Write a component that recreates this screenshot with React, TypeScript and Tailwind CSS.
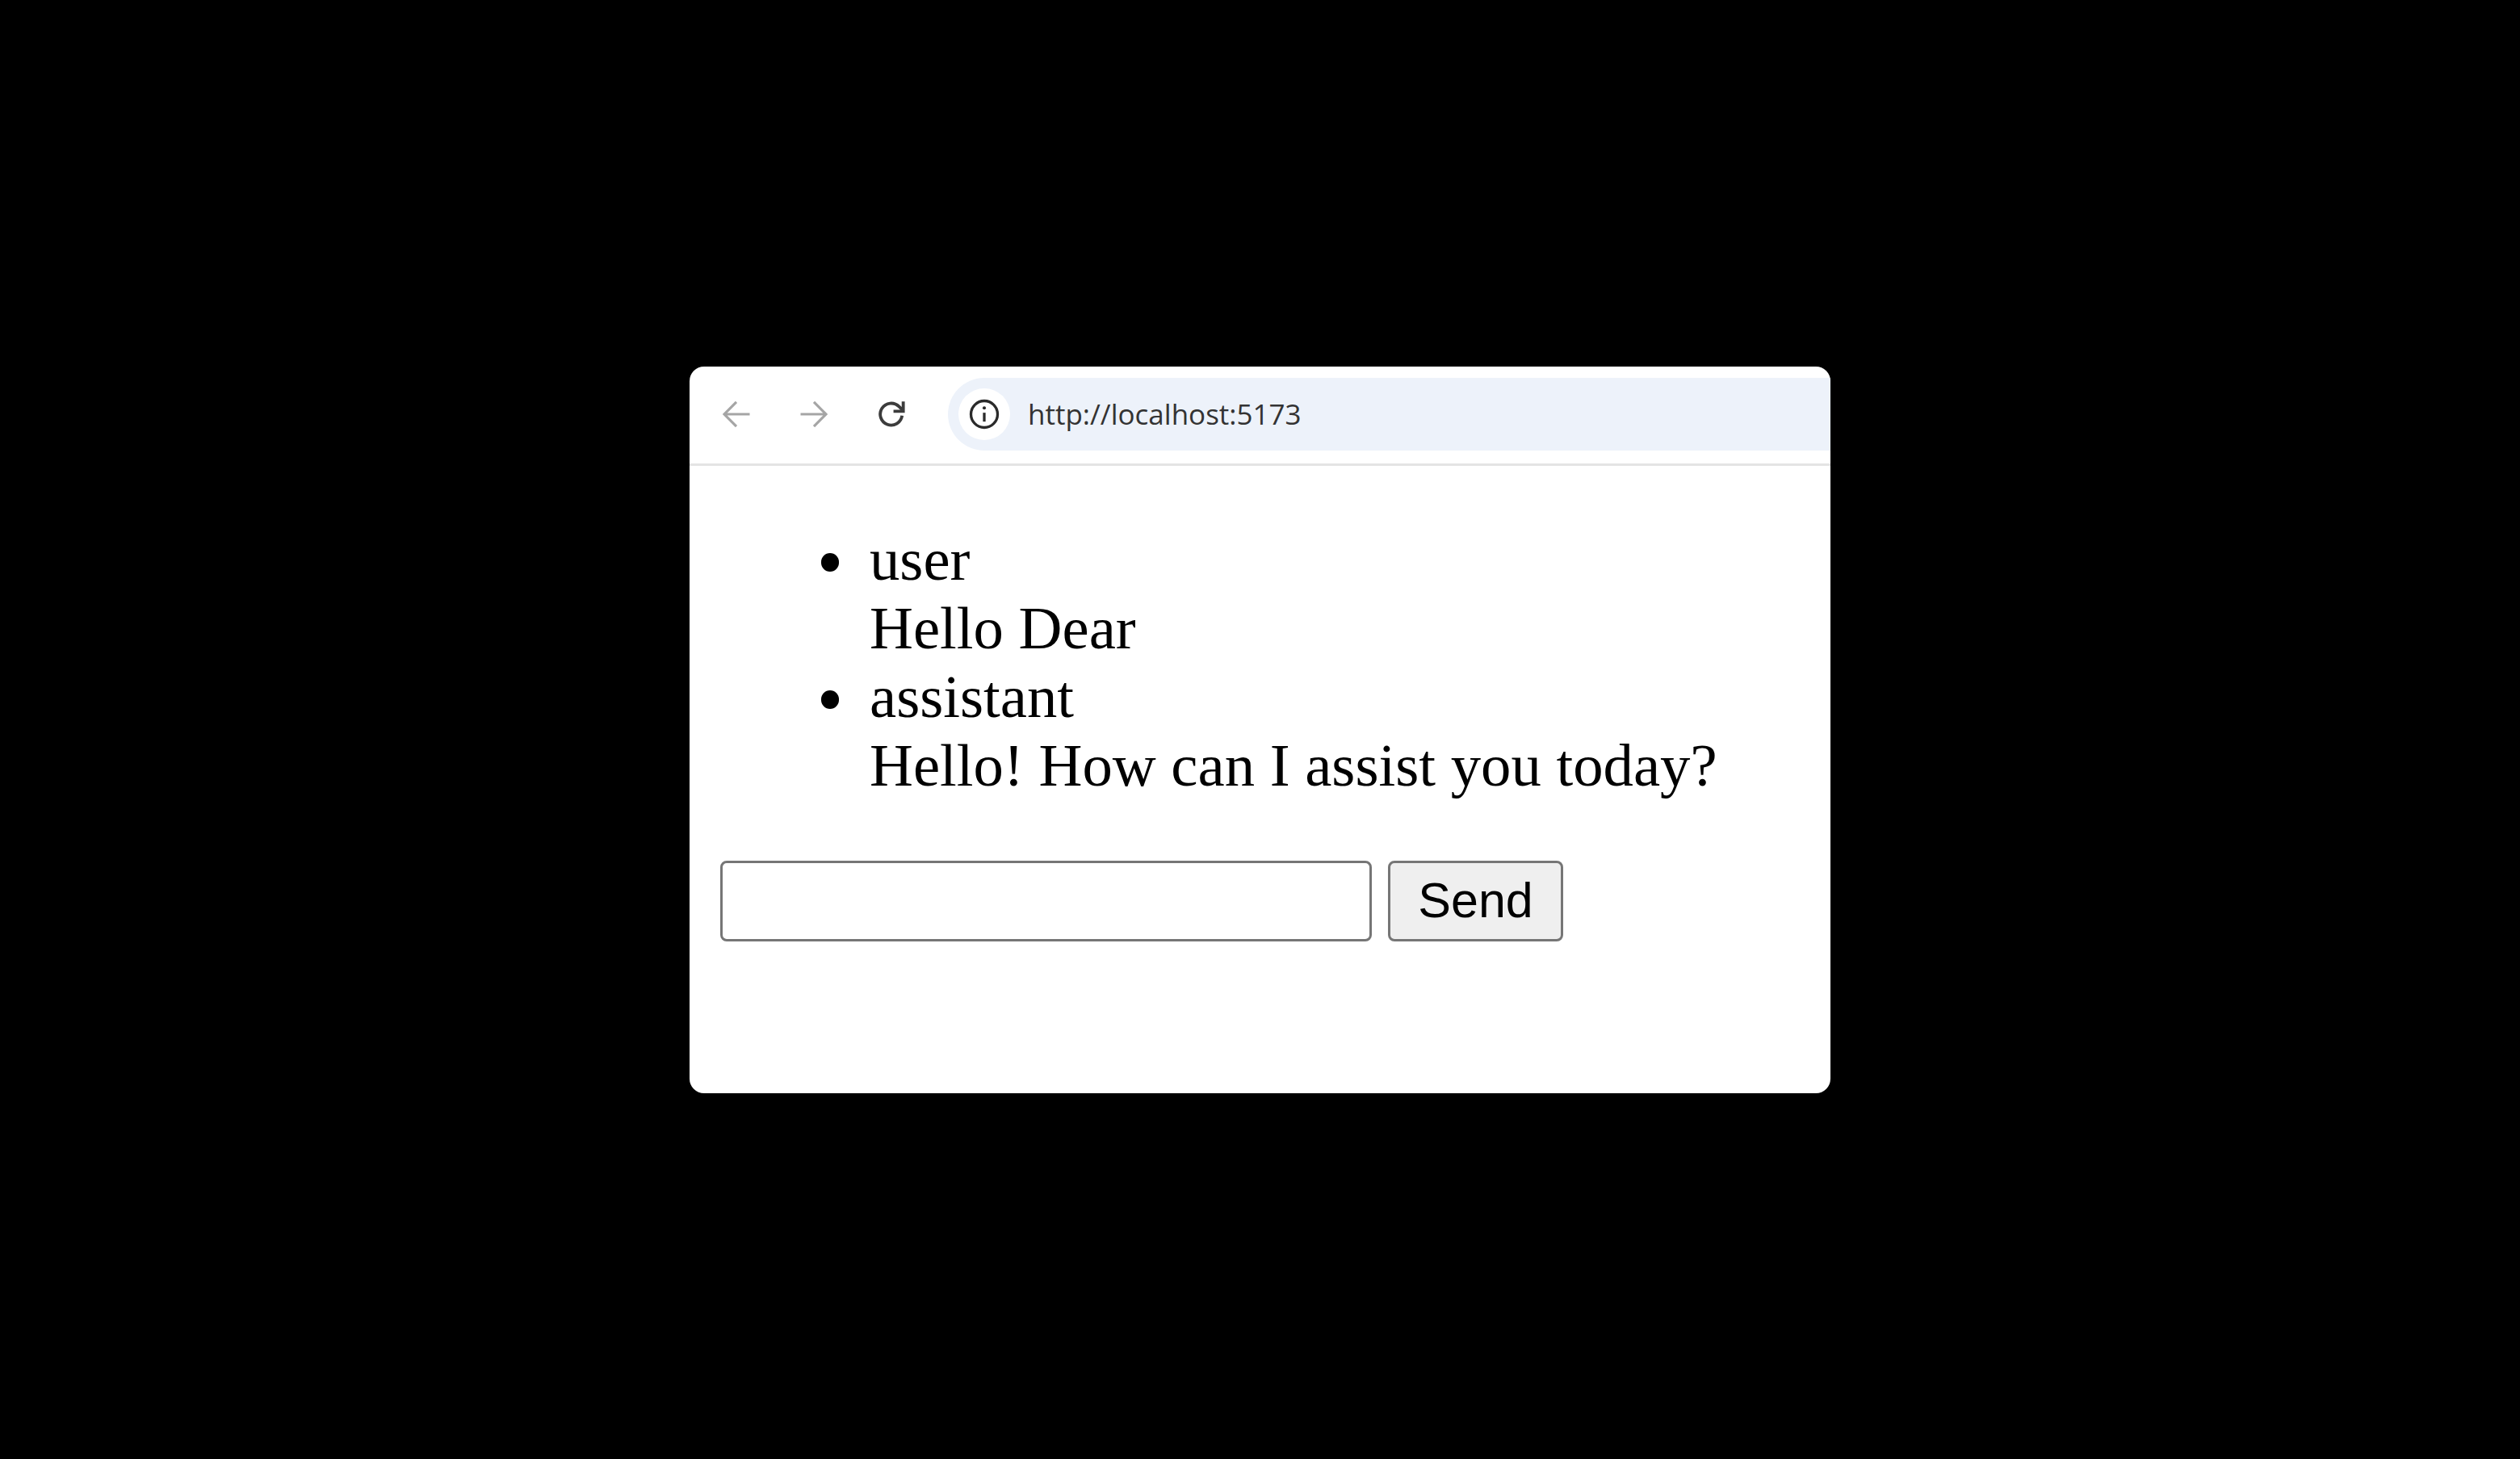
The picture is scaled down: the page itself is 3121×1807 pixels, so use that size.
import React from 'react';

const messages = [
  { role: 'user', text: 'Hello Dear' },
  { role: 'assistant', text: 'Hello! How can I assist you today?' },
];

const App: React.FC = () => {
  return (
    <div className="flex min-h-screen items-center justify-center bg-black">
      <div className="flex h-[900px] w-[1413px] flex-col overflow-hidden rounded-[18px] bg-white">
        {/* browser toolbar */}
        <div className="flex h-[123px] shrink-0 items-start border-b-[3px] border-[#e4e4e4] pt-[14px]">
          <div className="ml-[36px] flex h-[90px] items-center">
            <svg className="h-[44px] w-[44px] text-[#a5a5a5]" viewBox="0 0 24 24" fill="none" stroke="currentColor" strokeWidth="1.7">
              <path d="M21 12H4M12 3.8 3.8 12l8.2 8.2" />
            </svg>
            <svg className="ml-[52px] h-[44px] w-[44px] text-[#a5a5a5]" viewBox="0 0 24 24" fill="none" stroke="currentColor" strokeWidth="1.7">
              <path d="M3 12h17M12 3.8l8.2 8.2-8.2 8.2" />
            </svg>
            <svg className="ml-[52px] h-[44px] w-[44px] text-[#3c3c3c]" viewBox="0 0 24 24" fill="none" stroke="currentColor" strokeWidth="2.1">
              <path d="M19.2 13a7.4 7.4 0 1 1-2.1-6.2L19.4 9" />
              <path d="M20 3.4V10h-6.6" />
            </svg>
          </div>
          <div className="ml-[48px] flex h-[90px] flex-1 items-center rounded-l-[45px] bg-[#edf2fa] pl-[13px]">
            <div className="flex h-[64px] w-[64px] items-center justify-center rounded-full bg-white">
              <svg className="h-[44px] w-[44px] text-[#2a2a2a]" viewBox="0 0 24 24" fill="none" stroke="currentColor" strokeWidth="1.8">
                <circle cx="12" cy="12" r="9" />
                <path d="M12 11v6" />
                <circle cx="12" cy="7.8" r="1.1" fill="currentColor" stroke="none" />
              </svg>
            </div>
            <span className="ml-[22px] font-['Open_Sans',sans-serif] text-[35px] leading-none text-[#333333]">
              http://localhost:5173
            </span>
          </div>
        </div>

        {/* page body */}
        <div className="flex-1 px-[38px] font-['Liberation_Serif',serif] text-[74.7px] leading-[85px] text-black">
          <ul className="mt-[73px] mb-[76px] pl-[125px]">
            {messages.map((m) => (
              <li key={m.role} className="flex items-start">
                <span className="mt-[35px] mr-[38px] h-[23px] w-[22px] shrink-0 rounded-full bg-black" />
                <div>
                  <div>{m.role}</div>
                  <div>{m.text}</div>
                </div>
              </li>
            ))}
          </ul>
          <div className="flex gap-[20px]">
            <input className="h-[100px] w-[807px] rounded-[8px] border-[3px] border-[#767676] bg-white" />
            <button className="h-[100px] w-[217px] rounded-[8px] border-[3px] border-[#767676] bg-[#efefef] font-['Liberation_Sans',sans-serif] text-[61px] leading-none text-black">
              Send
            </button>
          </div>
        </div>
      </div>
    </div>
  );
};

export default App;
